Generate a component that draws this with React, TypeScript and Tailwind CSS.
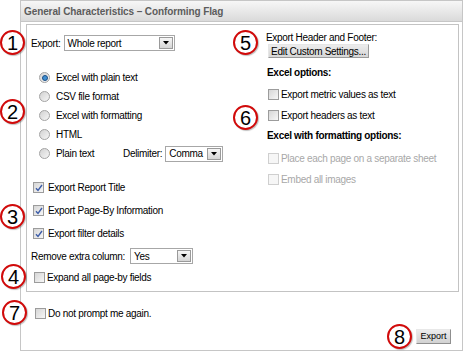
import React from "react";

const font = "font-['Liberation_Sans',Arial,sans-serif]";

const Badge = ({ n, pos }: { n: string; pos: string }) => (
  <div
    className={`absolute flex h-[25px] w-[25px] items-center justify-center rounded-full border-2 border-[#d10a0a] bg-white text-[20px] leading-none text-black shadow-[1px_1px_1px_rgba(0,0,0,0.25)] ${pos}`}
  >
    {n}
  </div>
);

const Check = ({ on = false, off = false }: { on?: boolean; off?: boolean }) => (
  <span
    className={`flex h-[11px] w-[11px] shrink-0 items-center justify-center border ${
      off
        ? "border-[#cfcfcf] bg-[#f6f6f6]"
        : "border-[#9c9c9c] bg-linear-to-br from-[#d6d6d6] to-[#f7f7f7]"
    }`}
  >
    {on && (
      <svg width="8" height="8" viewBox="0 0 8 8">
        <path d="M1 4.2 L3 6.5 L7 1" fill="none" stroke="#3d5da8" strokeWidth="1.4" />
      </svg>
    )}
  </span>
);

const Radio = ({ on = false }: { on?: boolean }) => (
  <span className="flex h-[11px] w-[11px] shrink-0 items-center justify-center rounded-full border border-[#a3a3a3] bg-linear-to-br from-[#d2d2d2] to-[#f6f6f6]">
    {on && (
      <span className="h-[6px] w-[6px] rounded-full border border-[#1c4f86] bg-[#3f8fd2]" />
    )}
  </span>
);

const Select = ({ value, w }: { value: string; w: string }) => (
  <div className={`flex h-[16px] items-center justify-between border border-[#a7a7a7] bg-white pl-[3px] ${w}`}>
    <span>{value}</span>
    <span className="mr-[1px] flex h-[12px] w-[14px] items-center justify-center border border-[#9a9a9a] bg-linear-to-b from-[#f6f6f6] to-[#d5d5d5]">
      <svg width="6" height="4" viewBox="0 0 6 4">
        <path d="M0 0 H6 L3 3.5 Z" fill="#000" />
      </svg>
    </span>
  </div>
);

export default function App() {
  return (
    <div className={`relative h-[360px] w-[466px] overflow-hidden bg-white text-[10px] tracking-[-0.3px] text-black ${font}`}>
      <div className="ml-[20px] flex h-[351px] w-[443px] flex-col border border-[#c6c6c6]">
        <div className="flex h-[21px] shrink-0 items-center border-b border-[#c6c6c6] bg-linear-to-b from-[#f7f7f7] to-[#dadada] pl-[3px] text-[10px] font-bold tracking-[-0.1px] text-[#5c5c5c]">
          General Characteristics – Conforming Flag
        </div>

        <div className="ml-[5px] mt-[2px] flex h-[268px] w-[433px] border border-[#c3c3c3]">
          {/* left column */}
          <div className="flex w-[239px] flex-col pl-[4px] pt-[10px]">
            <div className="flex h-[16px] items-center gap-[3px]">
              <span>Export:</span>
              <Select value="Whole report" w="w-[111px]" />
            </div>

            <div className="mt-[17px] flex flex-col pl-[8px]">
              {["Excel with plain text", "CSV file format", "Excel with formatting", "HTML"].map((t, i) => (
                <div key={t} className="flex h-[19px] items-center gap-[6px]">
                  <Radio on={i === 0} />
                  <span>{t}</span>
                </div>
              ))}
              <div className="flex h-[19px] items-center gap-[6px]">
                <Radio />
                <span className="w-[61px]">Plain text</span>
                <div className="flex items-center gap-[3px]">
                  <span>Delimiter:</span>
                  <Select value="Comma" w="w-[58px]" />
                </div>
              </div>
            </div>

            <div className="mt-[13px] flex flex-col pl-[2px]">
              {["Export Report Title", "Export Page-By Information", "Export filter details"].map((t) => (
                <div key={t} className="flex h-[23px] items-center gap-[4px]">
                  <Check on />
                  <span>{t}</span>
                </div>
              ))}
            </div>

            <div className="mt-[3px] flex h-[16px] items-center gap-[5px]">
              <span>Remove extra column:</span>
              <Select value="Yes" w="w-[63px]" />
            </div>

            <div className="mt-[4px] flex h-[18px] items-center gap-[2px] pl-[3px]">
              <Check />
              <span>Expand all page-by fields</span>
            </div>
          </div>

          {/* right column */}
          <div className="flex flex-col pt-[5px]">
            <div className="flex h-[14px] items-center">Export Header and Footer:</div>
            <div className="ml-[2px] flex h-[14px] w-[101px] items-center justify-center border border-t-[#e6e6e6] border-l-[#e6e6e6] border-r-[#9a9a9a] border-b-[#9a9a9a] bg-linear-to-b from-[#ececec] to-[#d6d6d6]">
              Edit Custom Settings...
            </div>
            <div className="ml-[1px] mt-[7px] flex h-[14px] items-center font-bold">Excel options:</div>
            <div className="ml-[2px] mt-[8px] flex h-[14px] items-center gap-[2px]">
              <Check />
              <span>Export metric values as text</span>
            </div>
            <div className="ml-[2px] mt-[7px] flex h-[14px] items-center gap-[2px]">
              <Check />
              <span>Export headers as text</span>
            </div>
            <div className="ml-[1px] mt-[6px] flex h-[14px] items-center font-bold">Excel with formatting options:</div>
            <div className="ml-[2px] mt-[9px] flex h-[14px] items-center gap-[2px] text-[#a8a8a8]">
              <Check off />
              <span>Place each page on a separate sheet</span>
            </div>
            <div className="ml-[2px] mt-[7px] flex h-[14px] items-center gap-[2px] text-[#a8a8a8]">
              <Check off />
              <span>Embed all images</span>
            </div>
          </div>
        </div>

        <div className="mt-[14px] flex h-[14px] items-center gap-[2px] pl-[14px]">
          <Check />
          <span>Do not prompt me again.</span>
        </div>

        <div className="mr-[11px] mt-[9px] flex h-[15px] w-[35px] items-center justify-center self-end border border-t-[#e8e8e8] border-l-[#e8e8e8] border-r-[#8f8f8f] border-b-[#8f8f8f] bg-linear-to-b from-[#ececec] to-[#d2d2d2] text-[9px] tracking-normal">
          Export
        </div>
      </div>

      <Badge n="1" pos="left-[0px] top-[30px]" />
      <Badge n="2" pos="left-[0px] top-[99px]" />
      <Badge n="3" pos="left-[0px] top-[204px]" />
      <Badge n="4" pos="left-[1px] top-[264px]" />
      <Badge n="7" pos="left-[2px] top-[300px]" />
      <Badge n="5" pos="left-[233px] top-[30px]" />
      <Badge n="6" pos="left-[233px] top-[105px]" />
      <Badge n="8" pos="left-[387px] top-[324px]" />
    </div>
  );
}
